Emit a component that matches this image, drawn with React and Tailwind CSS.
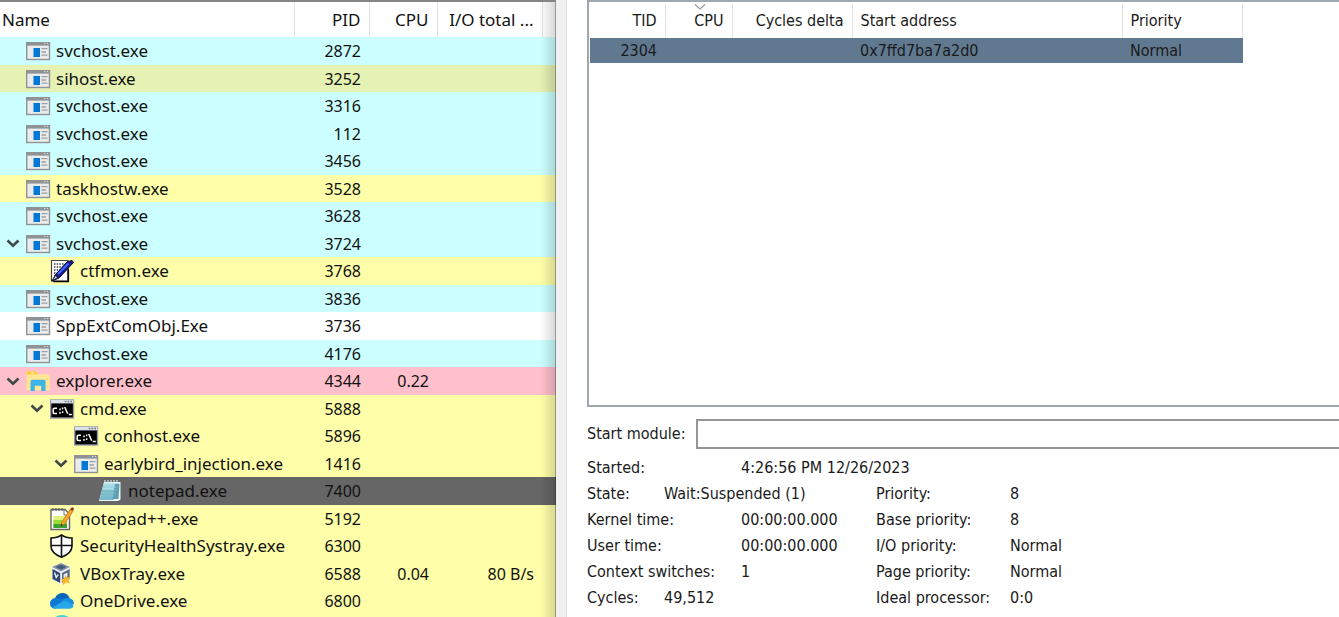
import React from "react";

const PROCESSES = [
  { name: "svchost.exe", pid: "2872", icon: "app", level: 0, tone: "service" },
  { name: "sihost.exe", pid: "3252", icon: "app", level: 0, tone: "fresh" },
  { name: "svchost.exe", pid: "3316", icon: "app", level: 0, tone: "service" },
  { name: "svchost.exe", pid: "112", icon: "app", level: 0, tone: "service" },
  { name: "svchost.exe", pid: "3456", icon: "app", level: 0, tone: "service" },
  { name: "taskhostw.exe", pid: "3528", icon: "app", level: 0, tone: "own" },
  { name: "svchost.exe", pid: "3628", icon: "app", level: 0, tone: "service" },
  { name: "svchost.exe", pid: "3724", icon: "app", level: 0, tone: "service", open: true },
  { name: "ctfmon.exe", pid: "3768", icon: "pen", level: 1, tone: "own" },
  { name: "svchost.exe", pid: "3836", icon: "app", level: 0, tone: "service" },
  { name: "SppExtComObj.Exe", pid: "3736", icon: "app", level: 0, tone: "plain" },
  { name: "svchost.exe", pid: "4176", icon: "app", level: 0, tone: "service" },
  { name: "explorer.exe", pid: "4344", cpu: "0.22", icon: "folder", level: 0, tone: "shell", open: true },
  { name: "cmd.exe", pid: "5888", icon: "console", level: 1, tone: "own", open: true },
  { name: "conhost.exe", pid: "5896", icon: "console", level: 2, tone: "own" },
  { name: "earlybird_injection.exe", pid: "1416", icon: "app", level: 2, tone: "own", open: true },
  { name: "notepad.exe", pid: "7400", icon: "notepad", level: 3, tone: "suspended" },
  { name: "notepad++.exe", pid: "5192", icon: "npp", level: 1, tone: "own" },
  { name: "SecurityHealthSystray.exe", pid: "6300", icon: "shield", level: 1, tone: "own" },
  { name: "VBoxTray.exe", pid: "6588", cpu: "0.04", io: "80 B/s", icon: "vbox", level: 1, tone: "own" },
  { name: "OneDrive.exe", pid: "6800", icon: "cloud", level: 1, tone: "own" },
  { name: "", pid: "", icon: "edge", level: 1, tone: "own" },
];

const TONES = {
  service: "bg-[#ccffff]",
  fresh: "bg-[#e5f2b3]",
  own: "bg-[#ffffaa]",
  plain: "bg-white",
  shell: "bg-[#ffc0cb]",
  suspended: "bg-[#666666]",
};

const INDENTS = ["pl-0", "pl-6", "pl-12", "pl-[72px]"];

const ICONS = {
  app: (
    <>
      <rect x="0.7" y="3.7" width="22.8" height="16.8" fill="#e9ebec" stroke="#8f9396" strokeWidth="1.4" />
      <rect x="0.5" y="3" width="23.2" height="3.6" fill="#8f9396" />
      <path d="M18 4.5h1.3M20.8 4.5h1.3" stroke="#d5d7d8" strokeWidth="1" />
      <rect x="7.5" y="9" width="6.5" height="9" fill="#0078d7" />
      <path d="M15.5 9.7h6M15.5 13h4.5M15.5 16.2h6" stroke="#a0a0a0" strokeWidth="1.3" />
    </>
  ),
  pen: (
    <>
      <path d="M1.5 1.5h16.5v20.5h-16.5z" fill="#fff" stroke="#444" strokeWidth="1.2" />
      <path d="M4 5h11M4 8h11M4 11h10M4 14h7M4 17h5" stroke="#333" strokeWidth="1.3" strokeDasharray="1.4 1.3" />
      <path d="M18.300 10v12.500h-15" stroke="#000" strokeWidth="1.600" fill="none" />
      <path d="M2 22l4-7L17 3l5-1.5 1.5 2L9 19z" fill="#1a1a8c" stroke="#05053a" strokeWidth="1" />
      <path d="M8 15L18.5 4.5" stroke="#3b6cff" strokeWidth="2" />
      <path d="M2.5 21.5l3-5 2 2.2z" fill="#ddd" stroke="#111" strokeWidth="0.7" />
    </>
  ),
  folder: (
    <>
      <path d="M0.5 2.5h9.5l2 2.8h11.8v16h-23.3z" fill="#ffe594" />
      <path d="M0.5 2.5h9.5l2 2.8h-11.5z" fill="#ffc928" />
      <path d="M5 3.8h3" stroke="#fff3c4" strokeWidth="1.2" />
      <path d="M4.5 22v-9.500q0-1.800 1.800-1.800h11.400q1.800 0 1.800 1.800v9.500h-4.300v-5.300h-6.400v5.300z" fill="#3cb4e7" />
    </>
  ),
  console: (
    <>
      <rect x="0.7" y="3" width="22.8" height="18" fill="#000" stroke="#939ba5" strokeWidth="1.4" />
      <rect x="1" y="3" width="22.4" height="3.4" fill="#dce1e8" />
      <path d="M14.8 4.5h1.6M17.6 4.5h1.6M20.4 4.5h1.6" stroke="#69727f" strokeWidth="1.4" />
      <path d="M7 11.2h-2.6q-1.2 0-1.2 1.2v3q0 1.2 1.2 1.2h2.6M10 11.5v1.7M10 15v1.8M12.6 10.5v1.7M12.6 14.3v1.7M14.7 10l3 6.8M18.8 17.5h3" stroke="#fff" strokeWidth="1.5" fill="none" />
    </>
  ),
  notepad: (
    <>
      <path d="M6 3l-5 19h19l2.5-1.5v-17.500z" fill="#f0f4f4" />
      <path d="M6 4l-4.500 17h13q4-1 4.500-5l2-12z" fill="#78b9ca" />
      <path d="M6 4h15l-1 7h-15.500z" fill="#a9dce6" />
      <path d="M17 5h4.500l-1 15h-6z" fill="#5e9fb3" />
      <path d="M6 8h13M5.500 11h13M4.500 14h13M3.800 17h12" stroke="#91cbd7" strokeWidth="0.700" />
      <path d="M7 1v4M10 1v4M13 1v4M16 1v4M19 1v4" stroke="#d7eef2" strokeWidth="1.100" />
    </>
  ),
  npp: (
    <>
      <path d="M1 2.500h14l4.500 4.500v15.500h-18.500z" fill="#fff" stroke="#666" strokeWidth="1.400" />
      <path d="M3.500 9h13.500v12h-13.500z" fill="#e1f27c" />
      <path d="M3.500 13h13.500v8h-13.500z" fill="#9bdb36" />
      <path d="M3.500 17h13.500v4h-13.500z" fill="#39a12f" />
      <path d="M3 1v3M6 1v3M9 1v3M12 1v3" stroke="#555" strokeWidth="1" />
      <path d="M14 3v5h5" fill="none" stroke="#777" strokeWidth="1" />
      <path d="M20 2.500l3 1.800-8.500 13-3.500 2 .7-4z" fill="#f5a425" stroke="#a96713" strokeWidth="0.600" />
      <path d="M20.500 1.500l1.800-1.300 1.700 1.100-.8 2.700-3-1.200z" fill="#992e36" />
      <path d="M11 19.300l.5-2.500 1.500 1.200z" fill="#222" />
    </>
  ),
  shield: (
    <>
      <path d="M11.500 0.900C8.500 3.200 5 4 1 4v8c0 5.500 4.500 8.900 10.500 11.200C17.500 20.900 22 17.500 22 12V4C18 4 14.500 3.200 11.500 0.900z" fill="#fff" stroke="#111" strokeWidth="1.600" />
      <path d="M11.500 1v22M1 11.500h21" stroke="#111" strokeWidth="1.600" />
    </>
  ),
  vbox: (
    <>
      <path d="M11 1l9 4v12.500l-9 5-9-5V5z" fill="#f1f5f8" />
      <path d="M11 1l9 4-9 4.500L2 5z" fill="#8495ab" />
      <path d="M5.500 5L11 2.600 16.500 5 11 7.700z" fill="#455c7e" />
      <path d="M2.500 7l7.700 4v10L2.500 17z" fill="#2c4770" />
      <path d="M4.500 10.500l1.700 5 2-3" fill="none" stroke="#e8edf3" strokeWidth="1.400" />
      <path d="M12 11l7.700-4v10L12 21z" fill="#526985" />
      <path d="M13.500 12.500l4-2v4l-4 2z" fill="#e8edf3" />
      <path d="M15.500 13l1.500 2.500 3.500-.5-2 3 1.500 3.500-3.500-1-3.500 2.500-.5-3.500-2-2.500h3.500z" fill="#fcb62d" />
    </>
  ),
  cloud: (
    <>
      <path d="M5 9Q7.500 4 12.500 4q5 0 7 5l-6 5z" fill="#0864b8" />
      <path d="M5 9Q0 10 0 14.500 0 19 5 19.800l11-8Q9 8 5 9z" fill="#1178d4" />
      <path d="M12 11q3-2.500 7.500-2Q24 10.500 24 15l-7 3z" fill="#1490df" />
      <path d="M2.500 18.500L13 12.300q2-.8 4 .5l6.800 3.700q-1 3.300-4.300 3.300H5q-1.500-.2-2.500-1.300z" fill="#28a8ea" />
    </>
  ),
  edge: <circle cx="12" cy="10" r="12" fill="#42d5ce" />,
};

function Icon({ name }) {
  return (
    <svg viewBox="0 0 24 24" className="size-6 shrink-0 overflow-visible" aria-hidden="true">
      {ICONS[name]}
    </svg>
  );
}

function ProcessTable() {
  const head = "border-r border-[#e2e2e2] py-0 font-normal";
  const number = "py-0 pr-2 text-right text-[16px]";
  return (
    <section className="relative w-[556px] shrink-0 overflow-hidden border-t-2 border-[#858585] bg-white font-['Noto_Sans','Open_Sans',sans-serif] text-[17px] leading-5 text-[#111111]">
      <table className="w-full table-fixed border-collapse whitespace-nowrap">
        <colgroup>
          <col className="w-[294px]" />
          <col className="w-[75px]" />
          <col className="w-[68px]" />
          <col className="w-[105px]" />
          <col />
        </colgroup>
        <thead>
          <tr className="h-[35px]">
            <th className={`${head} pl-[2px] text-left`}>Name</th>
            <th className={`${head} pr-2 text-right`}>PID</th>
            <th className={`${head} pr-2 text-right`}>CPU</th>
            <th className={`${head} pr-2 text-right`}>I/O total ...</th>
            <th></th>
          </tr>
        </thead>
        <tbody>
          {PROCESSES.map((p, i) => (
            <tr key={i} className={`odd:h-7 even:h-[27px] ${TONES[p.tone]}`}>
              <td className="p-0">
                <div className={`flex items-center ${INDENTS[p.level]}`}>
                  {p.open ? (
                    <button type="button" aria-label={`Collapse ${p.name}`} className="flex w-[26px] justify-center">
                      <svg viewBox="0 0 14 9" className="h-[9px] w-[14px]" aria-hidden="true">
                        <path d="M1.500 1.500L7 6.800 12.500 1.500" fill="none" stroke="#404848" strokeWidth="2.600" />
                      </svg>
                    </button>
                  ) : (
                    <span className="w-[26px]" />
                  )}
                  <Icon name={p.icon} />
                  <span className="pl-[6px]">{p.name}</span>
                </div>
              </td>
              <td className={number}>{p.pid}</td>
              <td className={number}>{p.cpu}</td>
              <td className={number}>{p.io}</td>
              <td className="p-0"></td>
            </tr>
          ))}
        </tbody>
      </table>
      <div className="pointer-events-none absolute inset-y-0 right-0 w-4 border-r border-black/40 bg-linear-to-r from-transparent to-black/15" />
    </section>
  );
}

function ThreadTable() {
  const head = "border-r border-[#e2e2e2] py-0 font-normal";
  return (
    <div className="h-[407px] border-t-2 border-b-2 border-l-2 border-[#a0a7ad] pt-[2px] pl-px">
      <table className="w-[653px] table-fixed border-collapse whitespace-nowrap">
        <colgroup>
          <col className="w-[75px]" />
          <col className="w-[67px]" />
          <col className="w-[120px]" />
          <col className="w-[270px]" />
          <col />
        </colgroup>
        <thead>
          <tr className="h-[34px]">
            <th className={`${head} pr-2 text-right`}>TID</th>
            <th className={`${head} relative pr-2 text-right`}>
              <svg viewBox="0 0 12 6" className="absolute top-0 left-7 h-[6px] w-3" aria-hidden="true">
                <path d="M1 .5L6 5 11 .5" fill="none" stroke="#999" strokeWidth="1.300" />
              </svg>
              CPU
            </th>
            <th className={`${head} pr-2 text-right`}>Cycles delta</th>
            <th className={`${head} pl-2 text-left`}>Start address</th>
            <th className={`${head} pl-2 text-left`}>Priority</th>
          </tr>
        </thead>
        <tbody>
          <tr className="h-[25px] bg-[#607990]">
            <td className="py-0 pr-2 text-right">2304</td>
            <td></td>
            <td></td>
            <td className="py-0 pl-2">0x7ffd7ba7a2d0</td>
            <td className="py-0 pl-2">Normal</td>
          </tr>
        </tbody>
      </table>
    </div>
  );
}

const LEFT_FACTS = [
  ["Started:", "4:26:56 PM 12/26/2023", "w-[154px]"],
  ["State:", "Wait:Suspended (1)", "w-[77px]"],
  ["Kernel time:", "00:00:00.000", "w-[154px]"],
  ["User time:", "00:00:00.000", "w-[154px]"],
  ["Context switches:", "1", "w-[154px]"],
  ["Cycles:", "49,512", "w-[77px]"],
];

const RIGHT_FACTS = [
  ["Priority:", "8", "w-[134px]"],
  ["Base priority:", "8", "w-[134px]"],
  ["I/O priority:", "Normal", "w-[134px]"],
  ["Page priority:", "Normal", "w-[134px]"],
  ["Ideal processor:", "0:0", "w-[134px]"],
];

function Facts({ items }) {
  return (
    <dl>
      {items.map(([label, value, width]) => (
        <div key={label} className="flex h-[26px] items-center">
          <dt className={`shrink-0 ${width}`}>{label}</dt>
          <dd>{value}</dd>
        </div>
      ))}
    </dl>
  );
}

export default function App() {
  return (
    <main className="flex h-screen overflow-hidden bg-white">
      <ProcessTable />
      <div className="w-[11px] shrink-0 border-r border-[#dddddd] bg-[#f0f0f0]" />
      <section className="min-w-0 flex-1 pl-5 font-['DejaVu_Sans_Condensed','DejaVu_Sans',sans-serif] text-[16px] leading-5 whitespace-nowrap text-[#1a1a1a]">
        <ThreadTable />
        <div className="mt-3 flex items-center">
          <label htmlFor="start-module" className="w-[109px]">
            Start module:
          </label>
          <input
            id="start-module"
            type="text"
            readOnly
            className="h-[30px] min-w-0 flex-1 border-y-2 border-l-2 border-[#969696] bg-white px-2 outline-none"
          />
        </div>
        <div className="mt-[6px] flex">
          <div className="w-[289px] shrink-0">
            <Facts items={LEFT_FACTS} />
          </div>
          <div className="pt-[26px]">
            <Facts items={RIGHT_FACTS} />
          </div>
        </div>
      </section>
    </main>
  );
}
